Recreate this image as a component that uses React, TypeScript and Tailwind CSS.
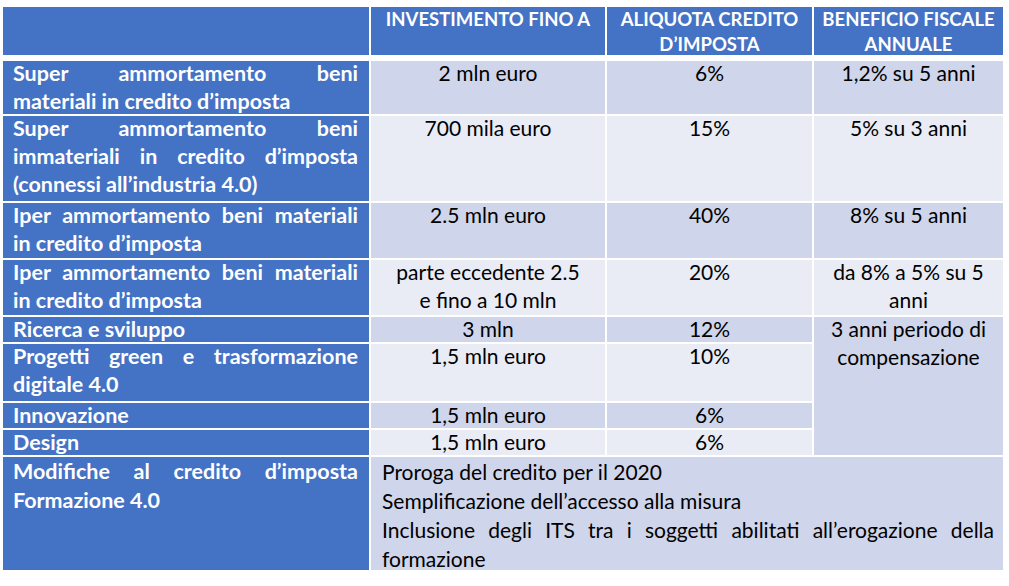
import React from "react";

const J = "[text-align-last:justify] text-justify";

function Line({ text, j }: { text: string; j?: boolean }) {
  return <div className={j ? J : "text-left"}>{text}</div>;
}

function Cell({ className, children }: { className: string; children?: React.ReactNode }) {
  return (
    <div className={className}>
      <div className="-mt-[2px]">{children}</div>
    </div>
  );
}

const blue = "bg-[#4472C4] text-white font-bold pl-[10px] pr-[11px] text-[21.5px] leading-[28px]";
const dark = "bg-[#CFD5EA] text-black text-center text-[21px] leading-[28px]";
const light = "bg-[#E9EBF5] text-black text-center text-[21px] leading-[28px]";

export default function App() {
  return (
    <div className="w-[1009px] h-[586px] bg-white pl-[3px] pt-[7px] font-[Lato,sans-serif] overflow-hidden">
      <div className="grid grid-cols-[366px_234px_205px_189px] gap-[2px] mb-[6px]">
        <div className="bg-[#4472C4] h-[48px]" />
        <div className="bg-[#4472C4] h-[48px] text-white font-bold text-[18.5px] leading-[25px] text-center">
          INVESTIMENTO FINO A
        </div>
        <div className="bg-[#4472C4] h-[48px] text-white font-bold text-[18.5px] leading-[25px] text-center">
          ALIQUOTA CREDITO
          <br />
          D’IMPOSTA
        </div>
        <div className="bg-[#4472C4] h-[48px] text-white font-bold text-[18.5px] leading-[25px] text-center">
          BENEFICIO FISCALE
          <br />
          ANNUALE
        </div>
      </div>
      <div className="grid grid-cols-[366px_234px_205px_189px] grid-rows-[53px_85px_55px_55px_25px_57px_25px_25px_113px] gap-[2px]">
        {/* Row 1 */}
        <Cell className={blue}>
          <Line text="Super ammortamento beni" j />
          <Line text="materiali in credito d’imposta" />
        </Cell>
        <Cell className={dark}>2 mln euro</Cell>
        <Cell className={dark}>6%</Cell>
        <Cell className={dark}>1,2% su 5 anni</Cell>

        {/* Row 2 */}
        <Cell className={blue}>
          <Line text="Super ammortamento beni" j />
          <Line text="immateriali in credito d’imposta" j />
          <Line text="(connessi all’industria 4.0)" />
        </Cell>
        <Cell className={light}>700 mila euro</Cell>
        <Cell className={light}>15%</Cell>
        <Cell className={light}>5% su 3 anni</Cell>

        {/* Row 3 */}
        <Cell className={blue}>
          <Line text="Iper ammortamento beni materiali" j />
          <Line text="in credito d’imposta" />
        </Cell>
        <Cell className={dark}>2.5 mln euro</Cell>
        <Cell className={dark}>40%</Cell>
        <Cell className={dark}>8% su 5 anni</Cell>

        {/* Row 4 */}
        <Cell className={blue}>
          <Line text="Iper ammortamento beni materiali" j />
          <Line text="in credito d’imposta" />
        </Cell>
        <Cell className={light}>
          parte eccedente 2.5
          <br />e fino a 10 mln
        </Cell>
        <Cell className={light}>20%</Cell>
        <Cell className={light}>
          da 8% a 5% su 5
          <br />
          anni
        </Cell>

        {/* Row 5 */}
        <Cell className={blue}>
          <Line text="Ricerca e sviluppo" />
        </Cell>
        <Cell className={dark}>3 mln</Cell>
        <Cell className={dark}>12%</Cell>
        <Cell className={`${dark} row-span-4`}>
          3 anni periodo di
          <br />
          compensazione
        </Cell>

        {/* Row 6 */}
        <Cell className={blue}>
          <Line text="Progetti green e trasformazione" j />
          <Line text="digitale 4.0" />
        </Cell>
        <Cell className={light}>1,5 mln euro</Cell>
        <Cell className={light}>10%</Cell>

        {/* Row 7 */}
        <Cell className={blue}>
          <Line text="Innovazione" />
        </Cell>
        <Cell className={dark}>1,5 mln euro</Cell>
        <Cell className={dark}>6%</Cell>

        {/* Row 8 */}
        <Cell className={blue}>
          <Line text="Design" />
        </Cell>
        <Cell className={light}>1,5 mln euro</Cell>
        <Cell className={light}>6%</Cell>

        {/* Row 9 */}
        <div className="bg-[#4472C4] text-white font-bold pl-[10px] pr-[11px] text-[21.5px] leading-[29px]">
          <Line text="Modifiche al credito d’imposta" j />
          <Line text="Formazione 4.0" />
        </div>
        <div className="col-span-3 bg-[#CFD5EA] text-black text-[21px] leading-[29px] pl-[11px] pr-[9px]">
          <Line text="Proroga del credito per il 2020" />
          <Line text="Semplificazione dell’accesso alla misura" />
          <Line text="Inclusione degli ITS tra i soggetti abilitati all’erogazione della" j />
          <Line text="formazione" />
        </div>
      </div>
    </div>
  );
}
